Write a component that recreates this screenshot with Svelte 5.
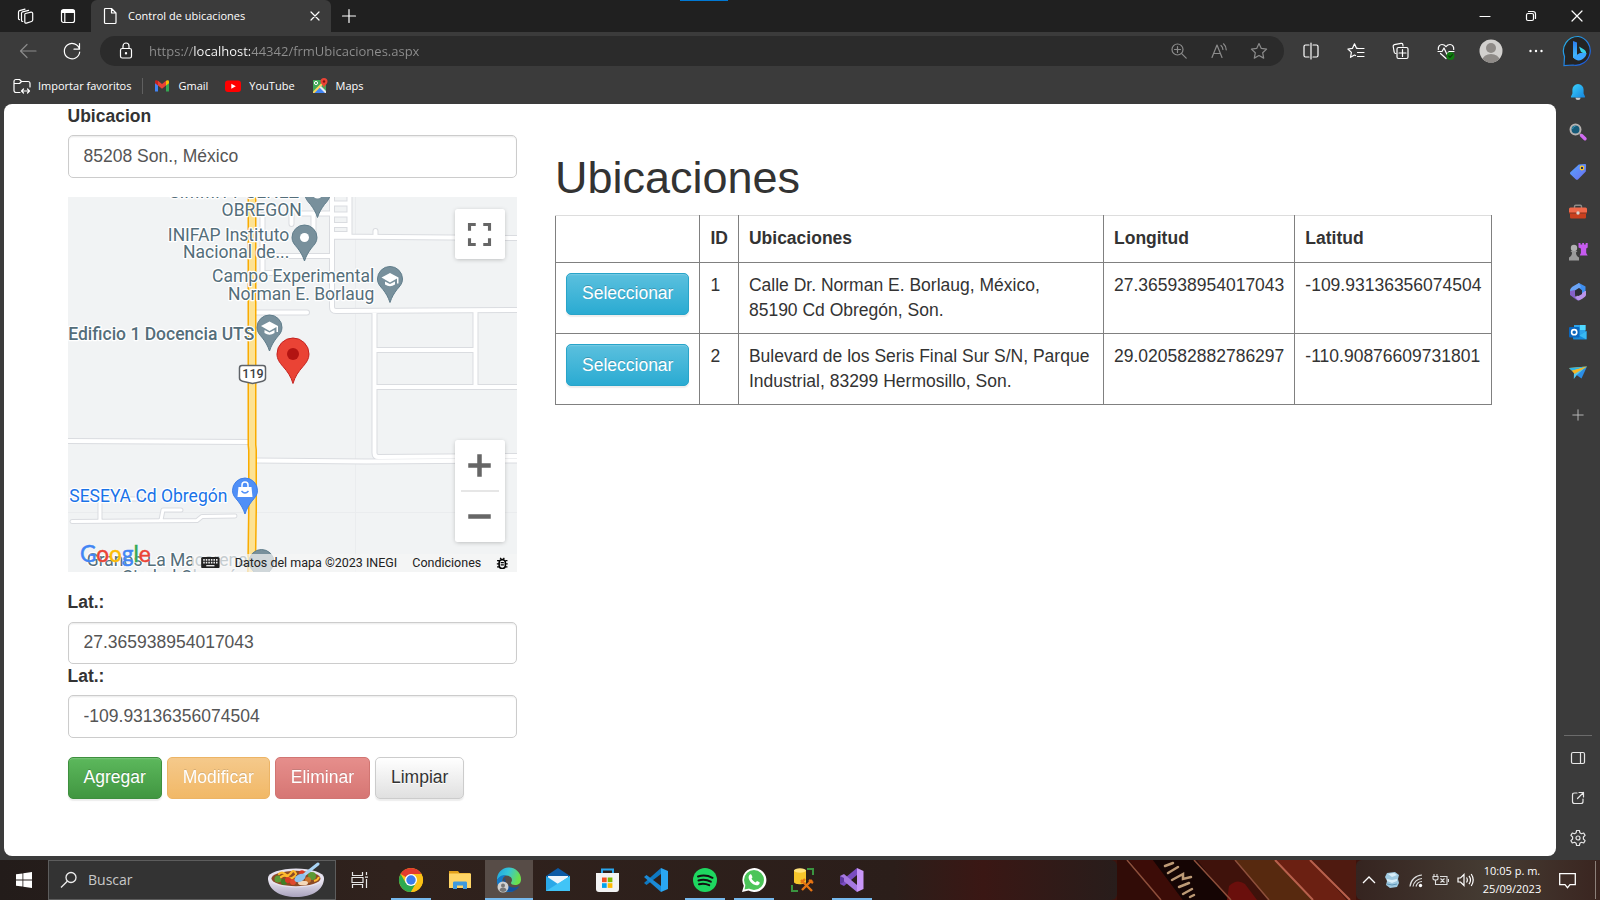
<script>
  let ubicacion = $state('85208 Son., México');
  let latitud = $state('27.365938954017043');
  let longitud = $state('-109.93136356074504');
  let url = $state('https://localhost:44342/frmUbicaciones.aspx');

  const filas = [
    { id: 1, lugar: 'Calle Dr. Norman E. Borlaug, México, 85190 Cd Obregón, Son.', lon: '27.365938954017043', lat: '-109.93136356074504' },
    { id: 2, lugar: 'Bulevard de los Seris Final Sur S/N, Parque Industrial, 83299 Hermosillo, Son.', lon: '29.020582882786297', lat: '-110.90876609731801' }
  ];

  const lateral = ['bell', 'search', 'tag', 'toolbox', 'games', 'm365', 'outlook', 'drop'];
  const lateralPie = ['panel', 'open', 'gear'];
  const apps = [
    { name: 'chrome', open: true },
    { name: 'folder' },
    { name: 'edge', open: true, active: true },
    { name: 'mail' },
    { name: 'store' },
    { name: 'vscode' },
    { name: 'spotify', open: true },
    { name: 'whatsapp', open: true },
    { name: 'sql' },
    { name: 'vs', open: true }
  ];
</script>

{#snippet sideIcon(name)}
  <svg width="20" height="20" viewBox="0 0 20 20" aria-hidden="true">
    {#if name === 'bell'}
      <defs><linearGradient id="bell" x1="0" y1="0" x2="1" y2="1"><stop offset="0" stop-color="#3bd5ff" /><stop offset="1" stop-color="#1683dc" /></linearGradient></defs>
      <path d="M7.5 15.5h5a2.5 2.5 0 0 1-5 0z" fill="#c9c9c9" />
      <path d="M10 2a5.6 5.6 0 0 0-5.600 5.600v4L3 14.600c-.2.600.1 1 .7 1h12.600c.6 0 .9-.4.7-1l-1.400-3v-4A5.600 5.600 0 0 0 10 2z" fill="url(#bell)" />
    {:else if name === 'search'}
      <path d="M12 12l2 2" stroke="#aaa" stroke-width="2" />
      <path d="M13.600 13.600l3.400 3.200" stroke="#d16bf2" stroke-width="3.400" stroke-linecap="round" />
      <circle cx="7.500" cy="7.500" r="5" fill="#155a78" stroke="#b6b2b0" stroke-width="2" />
      <path d="M4.500 7a3 3 0 0 1 3-2.800" stroke="#3e9abb" fill="none" />
    {:else if name === 'tag'}
      <defs><linearGradient id="tag" x1="0" y1="0" x2="1" y2="1"><stop offset="0" stop-color="#56a5ff" /><stop offset="1" stop-color="#6b6df0" /></linearGradient></defs>
      <path d="M10.800 2.500l6-.6c.8 0 1.300.5 1.300 1.300l-.3 6.300-7.600 7.700c-.8.8-1.700.8-2.500 0l-5-4.800c-.9-.8-.9-1.700-.1-2.500z" fill="url(#tag)" />
      <circle cx="14" cy="6" r="1.800" fill="#1e2f66" stroke="#ffc928" stroke-width="1.200" />
    {:else if name === 'toolbox'}
      <path d="M6.500 6V4.500c0-.8.5-1.200 1.200-1.200h4.600c.7 0 1.200.4 1.200 1.200V6" fill="none" stroke="#8f8b88" stroke-width="1.400" />
      <rect x="1" y="5.500" width="18" height="6" rx="1.500" fill="#f0694a" />
      <path d="M2 11.500h16V15c0 1-.5 1.500-1.500 1.500h-13C2.500 16.500 2 16 2 15z" fill="#c9401f" />
      <path d="M1 11h18" stroke="#922f17" />
      <circle cx="10" cy="11" r="1.700" fill="#d9d3ce" />
    {:else if name === 'games'}
      <path d="M10.500 1h2v1.500h1.700V1H16v1.500h1.700V1h2v4.500l-1.500 1v4.500l1.500 2.500h-8l1.200-2.500V6.500l-2.400-1z" fill="#c65bef" />
      <circle cx="6" cy="6" r="3.200" fill="#b0b0b0" />
      <path d="M2.500 9h7l-1.500 1.500c0 2 .5 3.500 3 5v3H1v-3C3.500 14 4 12.500 4 10.500z" fill="#9b9b9b" />
    {:else if name === 'm365'}
      <path d="M11 1l6.500 3.500v7l-4 2V8L7 4z" fill="#3f8ff0" />
      <path d="M11 1L6 3.800C3.500 5.200 2 6.500 2 9v3.500L7 15V9l6-4z" fill="#6ba4f5" />
      <path d="M2 9v4l6 4.500c2 1 3 1 4 .5l-5-4V8z" fill="#8560c8" />
      <path d="M18 9v4c0 2-6 5.500-8 5.500L7 15l6-3 4-3z" fill="#b994ea" />
      <path d="M7 8.500l4-2.500 3 2.500v3.500L10.500 14 7 12z" fill="#2c2c36" />
    {:else if name === 'outlook'}
      <path d="M6 3h11.500v8L12 14 6 11z" fill="#2da4ea" /><path d="M12 3h5.500v5H12z" fill="#50d9ff" />
      <path d="M5 9l7 4 6.500-4v7.500c0 .6-.4 1-1 1H6c-.6 0-1-.4-1-1z" fill="#1688d8" /><path d="M18.500 9v8.500L11 13.500z" fill="#38b8f2" />
      <rect x="1" y="5" width="10.500" height="10.500" rx="1" fill="#0a66bd" />
      <circle cx="6.200" cy="10.200" r="2.600" fill="none" stroke="#fff" stroke-width="1.600" />
    {:else}
      <path d="M1 6L19 4.500 7 11.500z" fill="#ffc12b" /><path d="M1 6L19 4.500 4 8.800z" fill="#2fb6e8" />
      <path d="M19 4.500l-5.500 12-5-3.500z" fill="#2b8de6" /><path d="M6 10.500L5.800 17l2.900-3.800L19 4.500z" fill="#53c8ee" /><path d="M4 8.800L19 4.500 6.500 12z" fill="#f5b525" />
    {/if}
  </svg>
{/snippet}

{#snippet lineIcon(name)}
  <svg class="line" width="20" height="20" viewBox="0 0 20 20" aria-hidden="true">
    {#if name === 'workspaces'}
      <path d="M9.500 7.500L15 6.200c1-.2 1.700.4 1.700 1.300V14c0 .8-.5 1.300-1.200 1.500l-5 1.600c-1 .3-1.700-.2-1.700-1.200V8.600c0-.6.3-1 .7-1.100zM6.800 15.500c-.8 0-1.300-.5-1.300-1.300V7.300c0-.8.4-1.300 1.100-1.500l6-1.500M3.500 13.700c-.7-.1-1-.6-1-1.300V6.200c0-.8.4-1.300 1.100-1.500l5.400-1.600" />
    {:else if name === 'tabs'}
      <rect x="3.500" y="3.500" width="13" height="13" rx="2" /><path d="M4 5.500h12M4 4.500h12M4 6.500h12M6.800 7v9" />
    {:else if name === 'page'}
      <path d="M5.500 2.500h6l4.500 4.500v9.500c0 .6-.4 1-1 1H5.500c-.6 0-1-.4-1-1v-13c0-.6.4-1 1-1zM11.500 2.500V7H16" />
    {:else if name === 'close'}
      <path d="M6 6l8 8M14 6l-8 8" />
    {:else if name === 'closeWindow'}
      <path d="M5 5l10 10M15 5L5 15" />
    {:else if name === 'plus'}
      <path d="M10 3.500v13M3.500 10h13" />
    {:else if name === 'minimize'}
      <path d="M5 10.500h10" />
    {:else if name === 'restore'}
      <rect x="5.500" y="7.500" width="7" height="7" rx="1.500" /><path d="M7.500 5.500H12c1.800 0 2.500 1 2.500 2.500v4.500" />
    {:else if name === 'back'}
      <path d="M18 10H2.500M9 3.500L2.500 10 9 16.500" />
    {:else if name === 'reload'}
      <path d="M17.500 8.200A7.700 7.700 0 1 0 17.700 11M17.500 2.500v5.700h-5.500" />
    {:else if name === 'lock'}
      <rect x="4.500" y="7.500" width="11" height="9.500" rx="1.800" /><path d="M7 7.500V5a3 3 0 0 1 6 0v2.500" /><circle cx="10" cy="12.300" r=".6" fill="currentColor" />
    {:else if name === 'zoom'}
      <circle cx="8.500" cy="8.500" r="5.500" /><path d="M12.700 12.700l4.500 4.500M8.500 5.500v6M5.500 8.500h6" />
    {:else if name === 'read'}
      <path d="M3 16.500L8 4l5 12.500M4.700 12.500h6.600M12 4.500c1.200 1 1.800 2.300 1.900 4M14.500 2.800c1.700 1.500 2.600 3.500 2.700 6" />
    {:else if name === 'star'}
      <path d="M10 2.500l2.300 4.900 5.300.7-3.900 3.700 1 5.300-4.700-2.600-4.700 2.600 1-5.300-3.900-3.700 5.300-.7z" />
    {:else if name === 'split'}
      <path d="M8 4H4.500C3.500 4 3 4.500 3 5.500v9c0 1 .5 1.500 1.500 1.500H8M12 4h3.500c1 0 1.500.5 1.500 1.500v9c0 1-.5 1.500-1.500 1.500H12M10 2v16" />
    {:else if name === 'favs'}
      <path d="M12 7.300h-1.500L8.500 2.800l-2 4.500-4.600.7 3.500 3.400-.9 4.900 4-2.300 1 .5M11.500 7.500h6.500M11.500 11.500H18M11.500 15.500H18" />
    {:else if name === 'collections'}
      <path d="M5 12.500c-1 .1-1.600-.4-1.800-1.300l-1-5.700c-.2-1 .3-1.700 1.200-1.900L10 2.400c1-.2 1.600.3 1.800 1.300l.2 1.300" />
      <path d="M13 6.500H7.500C6.500 6.500 6 7 6 8v8c0 1 .5 1.500 1.500 1.500h8c1 0 1.500-.5 1.500-1.500V8c0-1-.5-1.500-1.500-1.500zM11.500 8.500v7M8 12h7" />
    {:else if name === 'health'}
      <path d="M2.300 8.500C2 5.500 3.700 3.500 6 3.500c1.800 0 3 .9 4 2.200 1-1.300 2.200-2.200 4-2.200 2.300 0 4 2 3.700 5M4.500 12.500L10 17.500M2 10.500h4l2-3.500 3 6.500 2-3h5" />
      <circle cx="14.500" cy="15" r="4" fill="#107c10" stroke="none" /><path d="M12.700 15l1.300 1.300 2.500-2.700" stroke="#0a3f0a" />
    {:else if name === 'dots'}
      <g fill="currentColor" stroke="none"><circle cx="4.500" cy="10" r="1.200" /><circle cx="10" cy="10" r="1.200" /><circle cx="15.500" cy="10" r="1.200" /></g>
    {:else if name === 'import'}
      <path d="M8 16.500H4c-1 0-2-.8-2-2v-9c0-1.200.8-2 2-2h3.500l2 2H16c1.200 0 2 .8 2 2V11M2 7.500h5.500l2-2M9.500 15h8M11.500 13l-2 2 2 2M15.500 13l2 2-2 2" />
    {:else if name === 'panel'}
      <rect x="3.500" y="4.500" width="13" height="11" rx="1.500" /><path d="M12.500 4.500v11" />
    {:else if name === 'open'}
      <path d="M9 5H6.500C5 5 4.500 5.700 4.500 7v6.500c0 1.300.7 2 2 2H13c1.300 0 2-.7 2-2V11M11 4.500h4.500V9M15.500 4.500L9.500 10.500" />
    {:else if name === 'gear'}
      <path d="M8.600 2.500h2.800l.5 2.300 1.500.9 2.300-.7 1.400 2.400-1.700 1.600v2l1.700 1.600-1.400 2.400-2.300-.7-1.500.9-.5 2.300H8.600l-.5-2.300-1.500-.9-2.300.7-1.400-2.400L4.600 11V9L2.900 7.400 4.300 5l2.300.7 1.500-.9z" /><circle cx="10" cy="10" r="2" />
    {/if}
  </svg>
{/snippet}

{#snippet appIcon(name)}
  <svg width="26" height="26" viewBox="0 0 26 26" aria-hidden="true">
    {#if name === 'chrome'}
      <circle cx="13" cy="13" r="12" fill="#fbc116" />
      <path d="M13 13L2.600 7A12 12 0 0 1 23.400 7z" fill="#e33b2e" /><path d="M2.600 7A12 12 0 0 0 13 25l5.200-9H7.800z" fill="#2da94f" />
      <path d="M13 7h10.400A12 12 0 0 1 13 25l5.200-9z" fill="#fbc116" />
      <circle cx="13" cy="13" r="6" fill="#fff" /><circle cx="13" cy="13" r="4.700" fill="#3b7ded" />
    {:else if name === 'folder'}
      <path d="M2 4h9l1.500 2H23v5H2z" fill="#e3a11a" /><path d="M2 6.500h22V21H2z" fill="#ffd566" />
      <path d="M6 22v-6c0-1 .5-1.500 1.500-1.500h11c1 0 1.500.5 1.500 1.500v6h-4v-3.500h-6V22z" fill="#3e9ade" />
    {:else if name === 'edge'}
      <defs><linearGradient id="edge" x1="0" y1="0" x2="1" y2=".3"><stop offset="0" stop-color="#1ea4e0" /><stop offset=".5" stop-color="#36c5d8" /><stop offset="1" stop-color="#6be04c" /></linearGradient></defs>
      <path d="M1 13a12 12 0 0 1 24-1c.2 4-2.500 6-6 6-2.500 0-4-.8-4-2 0-.8 1-1.200 1-3 0-2.500-2.500-4.500-6-4.500-4 0-7 2-9 4.500z" fill="url(#edge)" />
      <path d="M1 13c2-4 5.500-5.500 9-4.500-3 1.500-4 4-3.500 7C7.300 21 12 24.500 18 24 9 27.500 0 22 1 13z" fill="#1378c8" />
      <path d="M9.500 10.500c-1.500 5 2 9.500 7.500 10 2.500.2 4.500-.5 6.500-1.500-3 5-9 7-13 5-4-2-5.500-9-1-13.500z" fill="#12519e" />
      <circle cx="7" cy="20" r="5.500" fill="#d0d0d0" /><circle cx="7" cy="18.500" r="2" fill="#777" /><path d="M3.500 23.500c0-4 7-4 7 0a5 5 0 0 1-7 0z" fill="#777" />
    {:else if name === 'mail'}
      <path d="M1 9L13 1l12 8v14H1z" fill="#0c5aa5" /><path d="M3 9h20v10H3z" fill="#eef5fb" /><path d="M1 9l12 8 12-8v15H1z" fill="#2aa8e8" /><path d="M1 24l24-15v15z" fill="#41c4f7" />
    {:else if name === 'store'}
      <path d="M8 8V2.500h11V8" fill="none" stroke="#2aa7ef" stroke-width="2" /><path d="M2 6h23v16a3 3 0 0 1-3 3H5a3 3 0 0 1-3-3z" fill="#f3f3f3" />
      <path d="M7 6V3.500h2V6zM18 6V3.500h2V6z" fill="#2aa7ef" />
      <path d="M8 10.500h4.700v4.700H8z" fill="#f25022" /><path d="M13.700 10.500h4.700v4.700h-4.700z" fill="#7fba00" /><path d="M8 16.200h4.700v4.700H8z" fill="#00a4ef" /><path d="M13.700 16.200h4.700v4.700h-4.700z" fill="#ffb900" />
    {:else if name === 'vscode'}
      <path d="M18 1l7 3v18l-7 3z" fill="#2aa6f2" /><path d="M18 7L3.500 18 1 16 18 1z" fill="#0f79c2" /><path d="M18 19L3.500 8 1 10l17 15z" fill="#1b8ad6" />
    {:else if name === 'spotify'}
      <circle cx="13" cy="13" r="12" fill="#1ed760" /><path d="M6 9.500c5-1.500 10-1 14.500 1.300M6.500 13.500c4.500-1.200 8.500-.8 12.300 1.200M7 17.200c3.800-.9 7-.6 10.200 1" fill="none" stroke="#121212" stroke-width="2" stroke-linecap="round" />
    {:else if name === 'whatsapp'}
      <path d="M1 25l1.800-6.300A12 12 0 1 1 7.500 23.500z" fill="#fff" /><circle cx="13" cy="13" r="10" fill="#4bc559" /><path d="M3.500 22.500l1-5 4 4z" fill="#4bc559" />
      <path d="M8.700 7.800c.7-.8 1.600-.6 1.900.2l.8 1.900c.2.500-.6 1.300-.9 1.700.9 1.900 2.300 3 4.100 3.800l1.400-1.500 2.600 1.300c.3 2.500-1.800 3.300-3.500 3-4-.8-7.500-4.500-7.500-8 0-1 .5-1.800 1.100-2.400z" fill="#fff" />
    {:else if name === 'sql'}
      <path d="M17 2h6v6M2 18v6h6" fill="none" stroke="#3a9440" stroke-width="2" /><path d="M4 3v12c0 3 12 3 12 0V3z" fill="#f6c52b" /><ellipse cx="10" cy="3.500" rx="6" ry="2.200" fill="#ffe27b" />
      <path d="M11 13l11 11M22 13L12 23M11 16l4-4M19 13l4 3" stroke="#e67413" stroke-width="2.400" />
    {:else}
      <path d="M18 1l6.500 3v18L18 25z" fill="#c896f7" /><path d="M18 1v7L5 19l-4-2v-2z" fill="#7a4cc0" /><path d="M1 9l4-2 13 11v7L1 11z" fill="#a678e0" /><path d="M1 9l4 2v4l-4 2z" fill="#5f3aa0" />
    {/if}
  </svg>
{/snippet}

{#snippet pin(x, y, color, edge)}
  <path transform="translate({x} {y})" d="M0-12.500A12.500 12.500 0 0 0-12.500 0c0 4.500 2.500 7 5.500 10.500C-4 14.500-1.800 18 0 23.500 1.800 18 4 14.500 7 10.500 10 7 12.500 4.500 12.500 0A12.500 12.500 0 0 0 0-12.500z" fill={color} stroke={edge} />
{/snippet}

{#snippet cap(x, y)}
  <path transform="translate({x} {y})" d="M-8.500-1.500L0-6l8.500 4.500v6H7v-5L0 3.500zM-5 2.500L0 5l5-2.500V5.500Q0 9-5 5.500z" fill="#fff" />
{/snippet}

<div class="desktop">
  <header class="titlebar">
    <button class="ico" aria-label="Áreas de trabajo">{@render lineIcon('workspaces')}</button>
    <button class="ico" aria-label="Acciones de pestaña">{@render lineIcon('tabs')}</button>
    <div class="tab">
      {@render lineIcon('page')}
      <span>Control de ubicaciones</span>
      <button aria-label="Cerrar pestaña">{@render lineIcon('close')}</button>
    </div>
    <button class="new" aria-label="Nueva pestaña">{@render lineIcon('plus')}</button>
    <i class="drag"></i>
    <div class="winctl">
      <button aria-label="Minimizar">{@render lineIcon('minimize')}</button>
      <button aria-label="Restaurar">{@render lineIcon('restore')}</button>
      <button aria-label="Cerrar">{@render lineIcon('closeWindow')}</button>
    </div>
  </header>

  <div class="toolbar">
    <button class="nav dim" aria-label="Atrás">{@render lineIcon('back')}</button>
    <button class="nav" aria-label="Actualizar">{@render lineIcon('reload')}</button>
    <div class="address">
      {@render lineIcon('lock')}
      <input aria-label="Barra de direcciones" bind:value={url} />
      <button class="dim" aria-label="Zoom">{@render lineIcon('zoom')}</button>
      <button class="dim" aria-label="Leer en voz alta">{@render lineIcon('read')}</button>
      <button class="dim" aria-label="Agregar a favoritos">{@render lineIcon('star')}</button>
    </div>
    <div class="tools">
      {#each ['split', 'favs', 'collections', 'health'] as t}
        <button aria-label={t}>{@render lineIcon(t)}</button>
      {/each}
      <button aria-label="Perfil">
        <svg width="24" height="24" viewBox="0 0 24 24"><defs><clipPath id="av"><circle cx="12" cy="12" r="11.500" /></clipPath></defs><circle cx="12" cy="12" r="11.500" fill="#d2d0ce" /><g fill="#8f8b88" clip-path="url(#av)"><circle cx="12" cy="9" r="5" /><ellipse cx="12" cy="21" rx="8.500" ry="6" /></g></svg>
      </button>
      <button aria-label="Configuración y más">{@render lineIcon('dots')}</button>
    </div>
    <button class="bing" aria-label="Bing">
      <svg width="32" height="32" viewBox="0 0 32 32">
        <defs><linearGradient id="bg" x1="0" y1="0" x2="1" y2="1"><stop offset="0" stop-color="#29b9e6" /><stop offset="1" stop-color="#1a4fe0" /></linearGradient><linearGradient id="bb" x1="0" y1="0" x2="0" y2="1"><stop offset="0" stop-color="#2a7df0" /><stop offset="1" stop-color="#48c8ff" /></linearGradient></defs>
        <path d="M16.500 1.500A14.500 14.500 0 1 1 11 30l-9 .5.500-9A14.500 14.500 0 0 1 16.500 1.500z" fill="#242424" stroke="url(#bg)" stroke-width="1.200" />
        <path d="M11 6l4 1.500v14l-1.500 3-2.500-2z" fill="url(#bb)" /><path d="M17 11.500l5 3c2 1 2.500 3 2 5l-5-2.500z" fill="#38d3e8" /><path d="M11 22l7-4 6.500 0c0 3-2 5-4.500 6.500-2 1.200-4.500 1.200-6 .3z" fill="#3ba7ff" />
      </svg>
    </button>
  </div>

  <nav class="favorites">
    <a class="import" href="#importar">{@render lineIcon('import')}<span>Importar favoritos</span></a>
    <i class="rule"></i>
    <a href="#gmail">
      <svg width="16" height="16" viewBox="0 0 16 16" aria-hidden="true"><path d="M1 4v9.500h3V7z" fill="#4285f4" /><path d="M15 4v9.500h-3V7z" fill="#34a853" /><path d="M1 5V3.500C1 2 3 2 4 2.800V7.500L1 5.300z" fill="#c5221f" /><path d="M15 5V3.500c0-1.500-2-1.500-3-.7V7.500l3-2.200z" fill="#fbbc04" /><path d="M4 2.800L8 6l4-3.200v4.700L8 10.700 4 7.500z" fill="#ea4335" /></svg>
      <span>Gmail</span></a>
    <a href="#youtube">
      <svg width="16" height="16" viewBox="0 0 16 16" aria-hidden="true"><rect y="2.500" width="16" height="11.500" rx="3" fill="#f00" /><path d="M6.300 5.700v5l4.500-2.500z" fill="#fff" /></svg>
      <span>YouTube</span></a>
    <a href="#maps">
      <svg width="16" height="16" viewBox="0 0 16 16" aria-hidden="true"><path d="M1 2h13v13H1z" fill="#3fa757" /><path d="M2 15l6.500-6.500L14 15z" fill="#4285f4" /><path d="M1 13.500L12.500 2 14 3.500 2.500 15H1z" fill="#fbd45c" /><path d="M7.500 9.500L13 15h1v-2L9 8z" fill="#e8eaed" /><circle cx="4" cy="5" r="1.600" fill="none" stroke="#fff" /><path d="M12 0a3.500 3.500 0 0 0-3.500 3.500C8.500 6 11 6.500 12 10c1-3.500 3.500-4 3.500-6.500A3.500 3.500 0 0 0 12 0z" fill="#ea4335" /><circle cx="12" cy="3.500" r="1.200" fill="#811411" /></svg>
      <span>Maps</span></a>
  </nav>

  <div class="body">
    <main class="page">
      <div class="container">
        <form class="left" onsubmit={(e) => e.preventDefault()}>
          <label for="ubicacion">Ubicacion</label>
          <input id="ubicacion" class="control" bind:value={ubicacion} />
          <div class="map">
            <svg class="canvas" viewBox="0 0 450 375" preserveAspectRatio="xMidYMid slice" role="img" aria-label="Mapa">
              <rect width="450" height="375" fill="#f1f3f4" />
              <path d="M287.500 0v375M0 315.500h450" stroke="#eaecee" fill="none" />
              {#each [['#dadce0', 1], ['#ffffff', 0]] as [color, extra]}
                <g fill="none" stroke={color} stroke-linecap="round" stroke-linejoin="round">
                  <g stroke-width={4 + extra * 2}>
                    <path d="M264 0v110q0 4 4 4L450 113M264 39.500L450 41M306.500 114v142q0 4 4 4l140-1M306.500 153h100M407.500 114v76M306.500 190H450M0 244l183 1M188 263.500l110 1 152-1" />
                    <path d="M233 16.500h31M223.500 18v9M245.500 17v18M194.500 18v58h9M192 59h72M187 115.500h52M264 6.500h17M264 17.500h17M264 28h17M264 37h17M281.500-4v42M307.500 34v5" />
                  </g>
                  <g stroke-width={3 + extra * 2}><path d="M4 324.500l125-1 5-4 33-.5M32 323v-18M93 323l2-10h18M22 302h18M60 302h12" /></g>
                </g>
              {/each}
              <path d="M184-5v253l.5 5v60l-1 70" stroke="#f9ab00" stroke-width="9" fill="none" />
              <path d="M184-5v253l.5 5v60l-1 70" stroke="#fde293" stroke-width="6" fill="none" />
              {@render pin(249.500, -3, '#78909c', '#607d8b')}
              <circle cx="249.500" cy="-3" r="4.500" fill="#fff" />
              {@render pin(236.500, 40.500, '#78909c', '#607d8b')}
              <circle cx="236.500" cy="40.500" r="4.500" fill="#fff" />
              {@render pin(322, 82, '#78909c', '#607d8b')}{@render cap(322, 82)}
              {@render pin(201.500, 130.500, '#78909c', '#607d8b')}{@render cap(201.500, 130.500)}
              {@render pin(193.500, 365, '#78909c', '#607d8b')}
              {@render pin(177, 293.500, '#4f8ff7', '#3f7fe8')}
              <path d="M170.500 290h13l1 10h-15z" fill="#fff" /><path d="M174 290v-2a3 3 0 0 1 6 0v2" fill="none" stroke="#fff" stroke-width="1.500" /><path d="M173.500 294q3.500 4 7 0" fill="none" stroke="#4f8ff7" stroke-width="1.400" />
              <path d="M174 168.500h21q2.500 0 2.500 2.500v10q0 2.500-3 3.200l-10 2.300-10-2.300q-3-.7-3-3.200v-10q0-2.500 2.500-2.500z" fill="#fff" stroke="#5f6368" stroke-width="1.500" />
              <path d="M225 141a16 16 0 0 0-16 16c0 5 2.500 8.500 6 12.500 4.500 5 8 10 10 17 2-7 5.500-12 10-17 3.500-4 6-7.500 6-12.500a16 16 0 0 0-16-16z" fill="#ea4335" stroke="#c5221f" />
              <circle cx="225" cy="157" r="6" fill="#b31412" />
            </svg>
            <svg class="canvas names" viewBox="0 0 360 300" preserveAspectRatio="xMidYMid slice">
              <text x="185" y="1" text-anchor="end">SIMMITT GENEZ</text>
              <text x="187" y="15" text-anchor="end">OBREGON</text>
              <text x="177" y="35" text-anchor="end">INIFAP Instituto</text>
              <text x="177" y="49" text-anchor="end">Nacional de...</text>
              <text x="245" y="68" text-anchor="end">Campo Experimental</text>
              <text x="245" y="82" text-anchor="end">Norman E. Borlaug</text>
              <text class="strong" x="149" y="114" text-anchor="end">Edificio 1 Docencia UTS</text>
              <text class="shop" x="1" y="244">SESEYA Cd Obregón</text>
              <text x="15" y="295">Granos La Macarena</text>
              <text x="43" y="309">Ciudad Obregón</text>
              <text class="shield" x="148" y="145" text-anchor="middle">119</text>
            </svg>
            <div class="google" aria-label="Google"><span class="b">G</span><span class="r">o</span><span class="y">o</span><span class="b">g</span><span class="g">l</span><span class="r">e</span></div>
            <button type="button" class="full" aria-label="Pantalla completa"><svg width="20" height="20" viewBox="0 0 20 20"><path d="M2 7V2h5M13 2h5v5M18 13v5h-5M7 18H2v-5" fill="none" stroke="#666" stroke-width="2.500" /></svg></button>
            <div class="zoomer">
              <button type="button" aria-label="Acercar"><svg width="20" height="20" viewBox="0 0 20 20"><path d="M10 1v18M1 10h18" stroke="#666" stroke-width="3.600" /></svg></button>
              <i></i>
              <button type="button" aria-label="Alejar"><svg width="20" height="20" viewBox="0 0 20 20"><path d="M1 10h18" stroke="#666" stroke-width="3.600" /></svg></button>
            </div>
            <div class="legal">
              <svg width="15" height="9" viewBox="0 0 18 11" aria-hidden="true"><rect width="18" height="11" rx="1.500" fill="#222" /><path d="M2 2.800h14M2 5.500h14" stroke="#eee" stroke-width="1.500" stroke-dasharray="1.500 1" /><path d="M5 8.500h8" stroke="#eee" stroke-width="1.300" /></svg>
              <span>Datos del mapa ©2023 INEGI</span>
              <a href="#condiciones">Condiciones</a>
              <svg width="10" height="10" viewBox="0 0 12 12" aria-hidden="true"><path d="M4 .8l1.200 1.500h1.600L8 .8M1 3.500h2M9 3.500h2M.8 6.500H3M9 6.500h2.200M1 9.500h2M9 9.500h2M4.500 5.500h3M4.500 7.500h3" stroke="#000" fill="none" stroke-width="1.200" /><rect x="3" y="2.700" width="6" height="8.300" rx="2.800" fill="none" stroke="#000" stroke-width="1.500" /></svg>
            </div>
          </div>
          <label for="lat">Lat.:</label>
          <input id="lat" class="control" bind:value={latitud} />
          <label for="lng">Lat.:</label>
          <input id="lng" class="control" bind:value={longitud} />
          <div class="actions">
            <button class="btn success">Agregar</button>
            <button class="btn warning" disabled>Modificar</button>
            <button class="btn danger" disabled>Eliminar</button>
            <button class="btn default">Limpiar</button>
          </div>
        </form>

        <section class="right">
          <h1>Ubicaciones</h1>
          <table>
            <thead>
              <tr><th></th><th>ID</th><th>Ubicaciones</th><th>Longitud</th><th>Latitud</th></tr>
            </thead>
            <tbody>
              {#each filas as fila (fila.id)}
                <tr>
                  <td><button class="btn info">Seleccionar</button></td>
                  <td>{fila.id}</td>
                  <td>{fila.lugar}</td>
                  <td>{fila.lon}</td>
                  <td class="nowrap">{fila.lat}</td>
                </tr>
              {/each}
            </tbody>
          </table>
        </section>
      </div>
    </main>

    <aside class="sidebar">
      {#each lateral as name}
        <button aria-label={name}>{@render sideIcon(name)}</button>
      {/each}
      <button class="add" aria-label="Personalizar">{@render lineIcon('plus')}</button>
      <i class="fill"></i>
      <i class="divider"></i>
      {#each lateralPie as name}
        <button aria-label={name}>{@render lineIcon(name)}</button>
      {/each}
    </aside>
  </div>

  <footer class="taskbar">
    <div class="dock">
      <button class="start" aria-label="Inicio"><svg width="16" height="16" viewBox="0 0 16 16"><path d="M0 2.300L6.500 1.400V7.600H0zM7.300 1.300L16 0v7.600H7.300zM0 8.400h6.500v6.200L0 13.700zM7.300 8.400H16V16l-8.700-1.300z" fill="#fff" /></svg></button>
      <label class="search">
        <svg width="18" height="18" viewBox="0 0 18 18" aria-hidden="true"><circle cx="11" cy="6.500" r="5" fill="none" stroke="#eee" stroke-width="1.300" /><path d="M7.300 10.200L1 16.500" stroke="#eee" stroke-width="1.300" /></svg>
        <input placeholder="Buscar" aria-label="Buscar" />
        <svg width="56" height="36" viewBox="0 0 56 36" aria-hidden="true">
          <defs><linearGradient id="bowl" x1="0" y1="0" x2="0" y2="1"><stop offset="0" stop-color="#f2eff8" /><stop offset="1" stop-color="#a9a2bd" /></linearGradient></defs>
          <path d="M0 16c0 12 12 19 28 19s28-7 28-19z" fill="url(#bowl)" />
          <ellipse cx="28" cy="16" rx="28" ry="9.500" fill="#e6e2ef" /><ellipse cx="28" cy="16.500" rx="24.500" ry="7.700" fill="#8c4a25" />
          <circle cx="10" cy="17" r="3.500" fill="#5c9a34" /><circle cx="16" cy="20" r="3" fill="#3f7f25" /><circle cx="44" cy="14" r="4" fill="#5c9a34" />
          <path d="M11 12q3-3 6 0t6-1 5 1M13 15q4-3 7 0t7-1" stroke="#fdb92e" stroke-width="2.200" fill="none" stroke-linecap="round" />
          <circle cx="20" cy="18" r="3" fill="#d93a25" /><circle cx="25" cy="20" r="3" fill="#e04a30" /><circle cx="34" cy="11" r="2.800" fill="#d93a25" /><circle cx="40" cy="18" r="3" fill="#c9742f" /><ellipse cx="35" cy="21" rx="5" ry="2.300" fill="#f5d8b8" /><path d="M46 19q4-1 5-4" stroke="#fdb92e" stroke-width="2" fill="none" />
          <path d="M50 2L36 13" stroke="#a9d4f5" stroke-width="3" stroke-linecap="round" /><ellipse cx="32" cy="16" rx="6" ry="3.600" transform="rotate(-28 32 16)" fill="#8ec3ee" />
        </svg>
      </label>
      <button class="view" aria-label="Vista de tareas"><svg width="18" height="16" viewBox="0 0 18 16"><path d="M1.500 0v3.500h10V0M1.500 16v-3.500h10V16M1 5.500h11v5H1zM15.500 0v3M15.500 7v9M14 5.200h3" fill="none" stroke="#e6e6e6" stroke-width="1.200" /></svg></button>
      {#each apps as app}
        <button class="app" class:open={app.open} class:active={app.active} aria-label={app.name}>{@render appIcon(app.name)}</button>
      {/each}
    </div>
    <svg class="wallpaper" viewBox="0 0 239 40" preserveAspectRatio="none" aria-hidden="true">
      <rect width="239" height="40" fill="#220806" />
      <path d="M0 0h10l36 40H0z" fill="#310c07" /><path d="M12 0h24l30 40H42z" fill="#3c0c07" />
      <path d="M36 0h42l35 40H66z" fill="#150504" /><path d="M80 0h38l34 40h-40z" fill="#3f120b" />
      <path d="M118 0h40l38 40h-45z" fill="#57290f" /><path d="M158 0h36l36 40h-34z" fill="#6b2012" /><path d="M194 0h45v40h-9z" fill="#4f1a10" />
      <path d="M112 26q8-8 16-2l12 16h-30z" fill="#6a0f0c" />
      <path d="M10 0l34 40M77 0l37 40M118 0l34 40" stroke="#8d4f3b" stroke-width="1.500" fill="none" />
      <path d="M158 0l38 40M193 0l40 40" stroke="#b8604c" stroke-width="2" fill="none" />
      <path d="M48 6l8-3M51 13l10-6M55 20l11-6v5l8-2M62 27l10-4M66 34l9-5M73 37l4-2" stroke="#bd9a76" stroke-width="2.500" stroke-linecap="round" fill="none" />
    </svg>
    <div class="tray">
      <svg width="14" height="8" viewBox="0 0 14 8" aria-hidden="true"><path d="M1 7l6-6 6 6" fill="none" stroke="#fff" stroke-width="1.300" /></svg>
      <svg width="16" height="16" viewBox="0 0 16 16" aria-hidden="true"><path d="M3 1l8-1 4 3-1 4 1 4-2 4-7 1-4-3 1-4-2-4z" fill="#9fc9e0" /><path d="M4 2l6-1 3 2-5 2zM3 7l5 1 5-1v2l-5 2-5-2z" fill="#d9eef8" /><path d="M3 12l5 1 5-1" stroke="#5e96b8" fill="none" /></svg>
      <svg width="16" height="16" viewBox="0 0 16 16" aria-hidden="true"><g fill="none" stroke="#ddd" stroke-width="1.200"><path d="M2 14.500A12.500 12.500 0 0 1 14 3" /><path d="M5 14.500A9.500 9.500 0 0 1 14 6.500" /><path d="M8 14.500a6.500 6.500 0 0 1 6-5" /></g><circle cx="12.500" cy="13.500" r="1.700" fill="#fff" /></svg>
      <svg width="17" height="12" viewBox="0 0 17 12" aria-hidden="true"><g fill="none" stroke="#ddd" stroke-width="1.100"><path d="M2 0v2.500M5 0v2.500M1 2.500h5v2Q6 6 3.500 6T1 4.500zM3.500 6v4.500H15v-8H8M16.500 5v3M8.500 4.500l4 4M12.500 4.500l-4 4" /></g></svg>
      <svg width="17" height="14" viewBox="0 0 17 14" aria-hidden="true"><g fill="none" stroke="#fff" stroke-width="1.200"><path d="M1 5h2.500L7 1.500v11L3.500 9H1zM9.500 4.500q1.700 2.500 0 5M12 2.800q3 4.200 0 8.400M14.200 1q4 6 0 12" /></g></svg>
      <time datetime="2023-09-25T22:05">10:05 p. m.<br />25/09/2023</time>
      <button class="notes" aria-label="Notificaciones"><svg width="17" height="17" viewBox="0 0 17 17"><path d="M.7 1.700h15.600v11H11l-2.500 3-2.500-3H.7z" fill="none" stroke="#fff" stroke-width="1.300" /></svg></button>
      <i class="peek"></i>
    </div>
  </footer>
</div>

<style>
  :global(body) { margin: 0; background: #3b3b3b; }
  .desktop { display: flex; flex-direction: column; min-height: 100vh; background: #3b3b3b; color: #fff; font: 12px/16px "Open Sans", "Noto Sans", sans-serif; }
  .desktop *, .desktop *::before { box-sizing: border-box; }
  button { font: inherit; color: inherit; background: none; border: 0; padding: 0; display: flex; align-items: center; justify-content: center; }
  svg { display: block; flex: none; }
  .line { fill: none; stroke: currentColor; stroke-width: 1.2; stroke-linejoin: round; stroke-linecap: round; }

  .titlebar { display: flex; height: 32px; padding-left: 5px; background: linear-gradient(#0078d4, #0078d4) 680px 0 / 48px 1px no-repeat #202020; }
  .ico { width: 42px; }
  .tab { display: flex; align-items: center; gap: 8px; width: 240px; margin-left: 2px; padding: 0 6px 0 9px; background: #3b3b3b; border-radius: 6px 6px 0 0; }
  .tab span { flex: 1; white-space: nowrap; font-size: 11px; }
  .new { width: 36px; }
  .drag { flex: 1; }
  .winctl { display: flex; }
  .winctl button { width: 46px; }

  .toolbar { display: flex; align-items: center; height: 36px; padding: 1px 6px 0 6px; }
  .nav { width: 44px; height: 30px; }
  .dim { color: #8b8b8b; }
  .address { flex: 1; display: flex; align-items: center; height: 30px; margin-left: 6px; padding: 0 5px 0 16px; background: #2b2b2b; border-radius: 15px; }
  .address input { flex: 1; min-width: 0; margin: 0 0 0 13px; padding: 0; border: 0; outline: 0; font: 13px/20px "Open Sans", "Noto Sans", sans-serif; color: transparent; background: linear-gradient(90deg, #8f8f8f 45px, #fff 45px, #fff 101px, #8f8f8f 101px); -webkit-background-clip: text; background-clip: text; }
  .address button { width: 40px; height: 30px; }
  .tools { display: flex; margin-left: 4px; }
  .tools button { width: 45px; height: 30px; }
  .bing { margin-left: 4px; width: 32px; }

  .favorites { display: flex; align-items: center; height: 36px; padding-left: 12px; gap: 17px; }
  .favorites a { display: flex; align-items: center; gap: 8px; color: #fff; text-decoration: none; font-size: 11px; }
  .favorites .import { gap: 6px; }
  .rule { width: 1px; height: 16px; margin: 0 -6px; background: #606060; }

  .body { flex: 1; display: flex; padding: 0 0 4px 4px; }
  .page { flex: 1; min-width: 0; background: #fff; border-radius: 8px; color: #333; overflow: hidden; }

  /* The document is viewed at 125 % page zoom. */
  .container { zoom: 1.25; display: flex; max-width: 1170px; margin: 0 auto; font: 14px/20px "Liberation Sans", Arial, sans-serif; }
  .left { width: 33.3333%; padding: 0 15px; }
  .right { width: 66.6667%; padding: 39px 15px 0; }
  .left label { display: block; margin-bottom: 5px; font-weight: 700; }
  .control { display: block; width: 100%; height: 34px; padding: 6px 12px; border: 1px solid #ccc; border-radius: 4px; background: #fff; color: #555; font: inherit; outline: 0; box-shadow: inset 0 1px 1px rgba(0, 0, 0, .075); }
  .actions { display: flex; gap: 4px; margin-top: 15px; }
  .btn { height: 34px; padding: 6px 12px; border: 1px solid; border-radius: 4px; color: #fff; text-shadow: 0 -1px 0 rgba(0, 0, 0, .2); box-shadow: inset 0 1px 0 rgba(255, 255, 255, .15), 0 1px 1px rgba(0, 0, 0, .075); }
  .success { background: linear-gradient(#5cb85c, #419641); border-color: #3e8f3e; }
  .warning { background: linear-gradient(#f0ad4e, #eb9316); border-color: #e38d13; }
  .danger { background: linear-gradient(#d9534f, #c12e2a); border-color: #b92c28; }
  .info { background: linear-gradient(#5bc0de, #2aabd2); border-color: #28a4c9; }
  .default { background: linear-gradient(#fff, #e0e0e0); border-color: #ccc; color: #333; text-shadow: 0 1px 0 #fff; }
  .btn:disabled { opacity: .65; box-shadow: none; }

  h1 { margin: 0 0 10px; font-size: 36px; line-height: 40px; font-weight: 400; }
  table { width: 100%; border-collapse: collapse; }
  th, td { padding: 8px; border: 1px solid #808080; text-align: left; vertical-align: top; }
  th { height: 37px; border-top-color: #ddd; }
  td { height: 57px; }
  .nowrap { white-space: nowrap; }

  .map { position: relative; display: grid; height: 300px; margin: 15px 0; overflow: hidden; font-family: Roboto, sans-serif; }
  .canvas { grid-area: 1 / 1; width: 100%; height: 300px; }
  .names text { font: 14px Roboto, sans-serif; fill: #546e7a; stroke: #fff; stroke-width: 2px; paint-order: stroke; stroke-linejoin: round; }
  .names .strong { font-weight: 500; }
  .names .shop { fill: #1a73e8; }
  .names .shield { font-size: 10px; font-weight: 500; fill: #3c4043; }
  .google { position: absolute; left: 10px; bottom: 3px; font: 18px/22px Lato, sans-serif; text-shadow: 0 0 1px #fff; -webkit-text-stroke: 0.4px; }
  .b { color: #4285f4; } .r { color: #ea4335; } .y { color: #fbbc04; } .g { color: #34a853; }
  .full, .zoomer { position: absolute; right: 10px; width: 40px; background: #fff; border-radius: 2px; box-shadow: 0 1px 4px -1px rgba(0, 0, 0, .3); }
  .full { top: 10px; height: 40px; }
  .zoomer { bottom: 24px; }
  .zoomer button { width: 40px; height: 40px; }
  .zoomer i { display: block; height: 1px; margin: 0 5px; background: #e6e6e6; }
  .legal { position: absolute; right: 0; bottom: 0; display: flex; align-items: center; height: 14px; padding: 0 7px; gap: 12px; background: rgba(245, 245, 245, .7); color: #222; font-size: 10px; line-height: 14px; }
  .legal a { color: inherit; text-decoration: none; }

  .sidebar { display: flex; flex-direction: column; align-items: center; width: 44px; margin: -32px 0 -2px; }
  .sidebar button { width: 44px; height: 40px; color: #e6e6e6; flex: none; }
  .sidebar .add { height: 46px; color: #bbb; }
  .sidebar .add svg { width: 16px; height: 16px; }
  .fill { flex: 1; }
  .divider { width: 28px; height: 1px; margin-bottom: 2px; background: #6b6b6b; }

  .taskbar { display: flex; height: 40px; background: #3d130d; }
  .dock { flex: 1; display: flex; min-width: 0; background: linear-gradient(90deg, #231c1a, #30221d 35%, #2b1e1a 80%, #3a1714 88%, #281d1b); border-radius: 0 6px 6px 0; }
  .start { width: 48px; }
  .search { display: flex; align-items: center; width: 288px; padding: 0 11px; background: #333; border: 1px solid #5d5d5d; }
  .search input { flex: 1; min-width: 0; padding: 0; margin: 0 0 0 10px; border: 0; outline: 0; background: none; color: #ccc; font: 14px/20px "Open Sans", "Noto Sans", sans-serif; }
  .search input::placeholder { color: #c8c8c8; opacity: 1; }
  .view { width: 48px; margin-right: 3px; }
  .app { position: relative; width: 48px; margin-right: 1px; }
  .open::before { content: ""; position: absolute; left: 4px; right: 4px; bottom: 0; height: 2px; background: #76b9ed; }
  .active { background: #574c47; }
  .active::before { left: 0; right: 0; }
  .wallpaper { width: 239px; height: 40px; }
  .tray { display: flex; align-items: center; width: 244px; padding-left: 6px; gap: 8px; background: linear-gradient(90deg, #352420, #453c33 55%, #3a2520); border-radius: 6px 0 0 6px; }
  time { width: 60px; text-align: center; font-size: 11px; line-height: 18px; white-space: nowrap; }
  .notes { width: 18px; height: 40px; margin-left: 8px; }
  .peek { width: 1px; height: 38px; margin-left: auto; margin-right: 4px; background: #8c807a; }
</style>
